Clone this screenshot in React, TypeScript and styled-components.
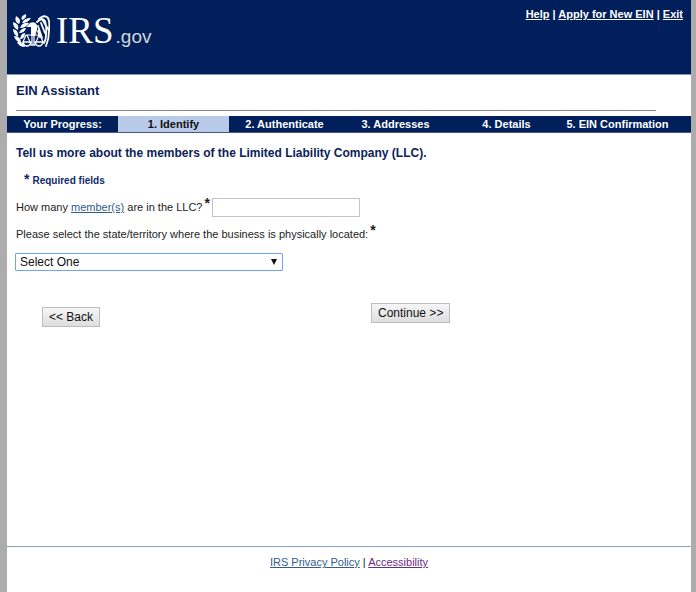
import React from "react";
import styled, { createGlobalStyle } from "styled-components";

const navy = "#001f5b";

const GlobalStyle = createGlobalStyle`
  * { box-sizing: border-box; }
  body {
    margin: 0;
    background: #acacac;
    font-family: "Liberation Sans", Arial, sans-serif;
    font-size: 11px;
    color: #222;
  }
`;

const Page = styled.div`
  display: flex;
  flex-direction: column;
  min-height: 100vh;
  margin: 0 5px 0 7px;
  background: #fff;
`;

const Header = styled.header`
  display: flex;
  justify-content: space-between;
  align-items: flex-start;
  height: 75px;
  padding: 8px 8px 0 6px;
  background: ${navy};
  border-bottom: 1px solid #8794b4;
  color: #fff;
`;

const Brand = styled.a`
  display: flex;
  align-items: baseline;
  color: #fff;
  text-decoration: none;
`;

const Emblem = styled.svg`
  width: 37px;
  height: 34px;
  align-self: center;
  margin-right: 6px;
`;

const BrandName = styled.span`
  font-family: "Liberation Serif", "Times New Roman", serif;
  font-size: 37px;
  line-height: 46px;
`;

const BrandSuffix = styled.span`
  margin-left: 2px;
  font-size: 19px;
  color: #d3d5d9;
`;

const TopLinks = styled.nav`
  font-weight: bold;
  line-height: 12px;
`;

const Link = styled.a<{ $color?: string }>`
  color: ${(p) => p.$color ?? "#2f5d8c"};
  text-decoration: underline;
`;

const AppTitle = styled.h1`
  margin: 0 35px 0 9px;
  padding: 8px 0 12px;
  border-bottom: 1px solid #858585;
  font-size: 13px;
  line-height: 15px;
  color: #0b2259;
`;

const Progress = styled.ol`
  display: grid;
  grid-template-columns: repeat(6, 1fr);
  margin: 5px 0 0;
  padding: 0 18px 0 0;
  list-style: none;
  background: ${navy};
  border-bottom: 1px solid #46598a;
`;

const Step = styled.li<{ $active?: boolean }>`
  background: ${(p) => (p.$active ? "#b9c9e8" : "transparent")};
  color: ${(p) => (p.$active ? "#111" : "#fff")};
  font-weight: bold;
  line-height: 16px;
  text-align: center;
  white-space: nowrap;
`;

const Form = styled.form`
  flex: 1;
  padding: 12px 9px;
`;

const Question = styled.h2`
  margin: 0;
  font-size: 12px;
  line-height: 16px;
  color: #0b2259;
`;

const RequiredNote = styled.p`
  display: flex;
  gap: 3px;
  margin: 12px 0 8px 8px;
  font-size: 10px;
  font-weight: bold;
  line-height: 16px;
  color: #102a6b;
`;

const Star = styled.span`
  font-size: 14px;
  font-weight: bold;
  line-height: 12px;
  align-self: flex-start;
`;

const Field = styled.div`
  display: flex;
  align-items: center;
  gap: 2px;
  min-height: 20px;
  margin-bottom: 7px;
`;

const CountInput = styled.input`
  width: 148px;
  height: 19px;
  padding: 1px 4px;
  border: 1px solid #c4c4c4;
  font: inherit;
`;

const SelectBox = styled.div`
  position: relative;
  width: 268px;
  margin: 9px 0 0 -1px;
`;

const StateSelect = styled.select`
  display: block;
  appearance: none;
  width: 100%;
  height: 18px;
  padding: 0 20px 0 4px;
  border: 1px solid #6ea3f5;
  border-radius: 1px;
  outline: none;
  background: #fff;
  font: inherit;
  font-size: 12px;
  color: #111;
`;

const Arrow = styled.svg`
  position: absolute;
  top: 6px;
  right: 6px;
  width: 6px;
  height: 6px;
  pointer-events: none;
`;

const Actions = styled.div`
  display: grid;
  grid-template-columns: 329px auto;
  justify-content: start;
  align-items: start;
  margin: 32px 0 0 26px;
`;

const Button = styled.button<{ $low?: boolean }>`
  justify-self: start;
  height: 20px;
  margin-top: ${(p) => (p.$low ? "4px" : "0")};
  padding: 0 6px;
  border: 1px solid #bdbdbd;
  background: linear-gradient(#f6f6f6, #dedede);
  font: inherit;
  font-size: 12px;
  line-height: 16px;
  color: #111;
  white-space: nowrap;
`;

const Footer = styled.footer`
  padding: 8px 0 22px;
  border-top: 1px solid #8b9fc6;
  line-height: 15px;
  text-align: center;
`;

const steps = [
  "Your Progress:",
  "1. Identify",
  "2. Authenticate",
  "3. Addresses",
  "4. Details",
  "5. EIN Confirmation",
];

const EagleEmblem = () => (
  <Emblem viewBox="0 0 37 34" fill="none" stroke="#fff" strokeLinecap="round" aria-hidden="true">
    <g fill="#fff" stroke="none">
      <path d="M9 6Q7 2 13 0Q14 4 9 6Z" />
      <path d="M9 9Q11 4 18 4Q15 9 9 9Z" />
      <path d="M6 10Q1 8 3 2Q9 5 6 10Z" />
      <path d="M7 14Q9 8 16 9Q13 14 7 14Z" />
      <path d="M5 16Q0 14 0 8Q7 10 5 16Z" />
      <path d="M6 19Q8 14 13 14Q12 19 6 19Z" />
      <path d="M5 23Q0 20 0 15Q6 16 5 23Z" />
      <path d="M7 25Q8 19 12 19Q12 25 7 25Z" />
      <path d="M8 29Q2 27 1 22Q8 22 8 29Z" />
      <path d="M12 33Q6 33 4 28Q10 27 12 33Z" />
      <path d="M13 13L17 9Q22 7 24 11L24 16L22 22H18L18 13Z" />
    </g>
    <path d="M26 5Q31 0 35 4Q37 8 36 17Q36 25 33 32M24 8Q29 3 32 7Q34 14 33 21Q33 26 31 29M25 12L29 24M28 9L32 19M25 17L27 23M29 5L35 15" strokeWidth="1.8" />
    <path d="M19 18V30M21 18V30M13 21H27M13 21L10 28M14 21L17 28M26 21L23 28M27 21L30 28" strokeWidth="1.2" />
    <path d="M10 28H18Q17 32 14 32Q11 32 10 28ZM22 28H30Q29 32 26 32Q23 32 22 28ZM18 31H22" strokeWidth="1.3" />
  </Emblem>
);

export default function App() {
  return (
    <>
      <GlobalStyle />
      <Page>
        <Header>
          <Brand href="#" aria-label="IRS.gov">
            <EagleEmblem />
            <BrandName>IRS</BrandName>
            <BrandSuffix>.gov</BrandSuffix>
          </Brand>
          <TopLinks>
            <Link href="#" $color="#fff">Help</Link> |{" "}
            <Link href="#" $color="#fff">Apply for New EIN</Link> |{" "}
            <Link href="#" $color="#fff">Exit</Link>
          </TopLinks>
        </Header>
        <AppTitle>EIN Assistant</AppTitle>
        <Progress>
          {steps.map((step) => (
            <Step key={step} $active={step === "1. Identify"}>{step}</Step>
          ))}
        </Progress>
        <Form onSubmit={(e) => e.preventDefault()}>
          <Question>Tell us more about the members of the Limited Liability Company (LLC).</Question>
          <RequiredNote><Star>*</Star> Required fields</RequiredNote>
          <Field>
            <label htmlFor="members">
              How many <Link href="#">member(s)</Link> are in the LLC?
            </label>
            <Star>*</Star>
            <CountInput id="members" type="text" />
          </Field>
          <Field>
            <label htmlFor="state">
              Please select the state/territory where the business is physically located:
            </label>
            <Star>*</Star>
          </Field>
          <SelectBox>
            <StateSelect id="state" defaultValue="">
              <option value="">Select One</option>
            </StateSelect>
            <Arrow viewBox="0 0 6 6" aria-hidden="true"><path d="M0 0H6L3 6Z" fill="#111" /></Arrow>
          </SelectBox>
          <Actions>
            <Button type="button" $low>&lt;&lt; Back</Button>
            <Button type="submit">Continue &gt;&gt;</Button>
          </Actions>
        </Form>
        <Footer>
          <Link href="#">IRS Privacy Policy</Link> |{" "}
          <Link href="#" $color="#6b2c85">Accessibility</Link>
        </Footer>
      </Page>
    </>
  );
}
